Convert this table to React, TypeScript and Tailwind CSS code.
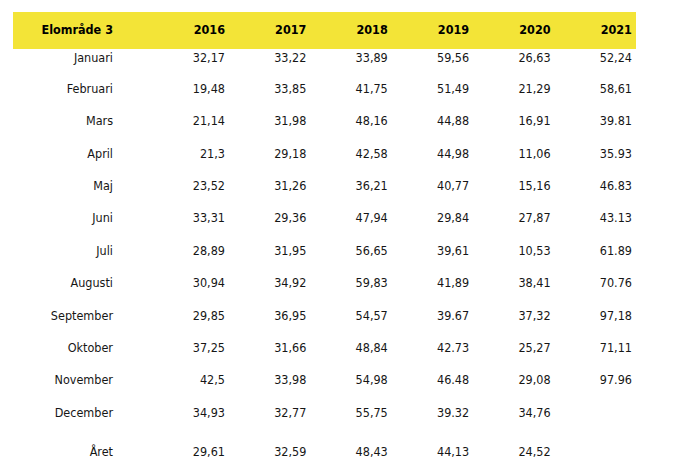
const years = ["2016", "2017", "2018", "2019", "2020", "2021"];

const rows: [string, string[]][] = [
  ["Januari", ["32,17", "33,22", "33,89", "59,56", "26,63", "52,24"]],
  ["Februari", ["19,48", "33,85", "41,75", "51,49", "21,29", "58,61"]],
  ["Mars", ["21,14", "31,98", "48,16", "44,88", "16,91", "39.81"]],
  ["April", ["21,3", "29,18", "42,58", "44,98", "11,06", "35.93"]],
  ["Maj", ["23,52", "31,26", "36,21", "40,77", "15,16", "46.83"]],
  ["Juni", ["33,31", "29,36", "47,94", "29,84", "27,87", "43.13"]],
  ["Juli", ["28,89", "31,95", "56,65", "39,61", "10,53", "61.89"]],
  ["Augusti", ["30,94", "34,92", "59,83", "41,89", "38,41", "70.76"]],
  ["September", ["29,85", "36,95", "54,57", "39.67", "37,32", "97,18"]],
  ["Oktober", ["37,25", "31,66", "48,84", "42.73", "25,27", "71,11"]],
  ["November", ["42,5", "33,98", "54,98", "46.48", "29,08", "97.96"]],
  ["December", ["34,93", "32,77", "55,75", "39.32", "34,76", ""]],
  ["Året", ["29,61", "32,59", "48,43", "44,13", "24,52", ""]],
];

const cols = "grid grid-cols-[100px_112px_repeat(5,81.4px)] pr-[4px]";

export default function App() {
  return (
    <div className="w-[689px] h-[474px] bg-white text-[12.5px] text-[#161616] font-['DejaVu_Sans_Condensed','DejaVu_Sans',sans-serif] font-stretch-condensed pl-[13px] pt-[12px]">
      <div className="w-[623px]">
        {/* Header */}
        <div className={`${cols} h-[37px] items-center bg-[#f3e437] font-bold text-black`}>
          <div className="text-right">Elområde 3</div>
          {years.map((y) => (
            <div key={y} className="text-right">
              {y}
            </div>
          ))}
        </div>

        {/* Body */}
        {rows.map(([month, vals], i) => (
          <div
            key={month}
            className={`${cols} items-center ${
              i === 0 ? "h-[24px] pb-[8px]" : i === rows.length - 1 ? "h-[46px]" : "h-[32.4px]"
            }`}
          >
            <div className="text-right">{month}</div>
            {vals.map((v, j) => (
              <div key={j} className="text-right">
                {v}
              </div>
            ))}
          </div>
        ))}
      </div>
    </div>
  );
}
